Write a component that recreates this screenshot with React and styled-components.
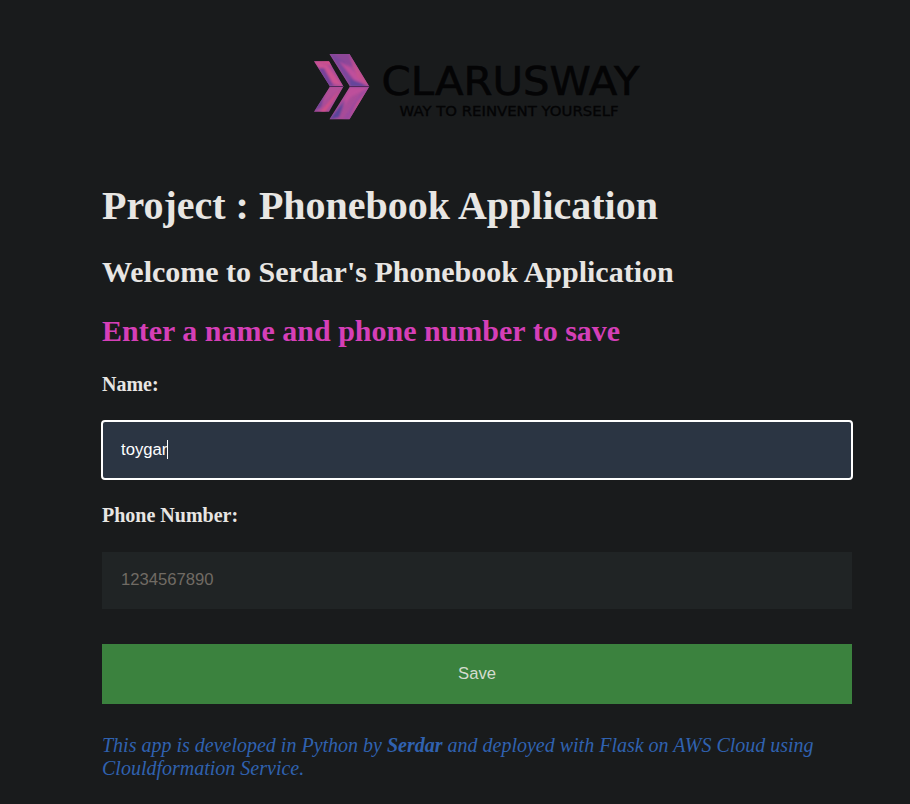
import React from "react";
import styled, { createGlobalStyle } from "styled-components";

const GlobalStyle = createGlobalStyle`
  * { box-sizing: border-box; }
  body {
    margin: 0;
    background: #191b1c;
    color: #e8e6e3;
    font-family: "Liberation Serif", "Times New Roman", serif;
    overflow: hidden;
  }
`;

const Page = styled.main`
  width: 750px;
  height: 804px;
  margin-left: 102px;
  display: flex;
  flex-direction: column;
`;

const Logo = styled.svg`
  width: 334px;
  height: 74px;
  margin: 50px 0 0 208px;
  flex: none;
`;

const Title = styled.h1`
  margin: 59px 0 0;
  font-size: 40px;
  line-height: 46px;
  white-space: nowrap;
`;

const Subtitle = styled.h2`
  margin: ${(p) => p.$gap}px 0 0;
  font-size: 30px;
  line-height: 34px;
  color: ${(p) => p.$color || "inherit"};
  white-space: nowrap;
`;

const Form = styled.form`
  display: flex;
  flex-direction: column;
  margin-top: 25px;
`;

const Label = styled.label`
  font-size: 20px;
  line-height: 23px;
  font-weight: bold;
`;

const Field = styled.div`
  display: flex;
  align-items: center;
  height: 57px;
  margin: 25px 0;
  padding: 0 19px 2px;
  background: #202425;
  color: #706b64;
  font: 16.67px/20px "Liberation Sans", Arial, sans-serif;
`;

const FocusedField = styled(Field)`
  height: 60px;
  margin: 24px -1px;
  padding: 0 18px 1px;
  background: #2b3543;
  border: 2px solid #fff;
  border-radius: 4px;
  color: #fff;
`;

const Caret = styled.span`
  width: 1px;
  height: 19px;
  background: #fff;
`;

const SaveButton = styled.button`
  height: 60px;
  margin-top: 10px;
  padding: 0 0 1px;
  border: 0;
  background: #3b823e;
  color: #d4dccf;
  font: 16.67px "Liberation Sans", Arial, sans-serif;
`;

const Footer = styled.p`
  margin: 30px 0 0;
  font-size: 20px;
  line-height: 23px;
  font-style: italic;
  color: #3062b0;
`;

function ClaruswayLogo() {
  return (
    <Logo viewBox="310 50 334 74" role="img" aria-label="Clarusway">
      <defs>
        <filter id="facets" x="-10%" y="-10%" width="120%" height="120%">
          <feGaussianBlur stdDeviation="1.3" />
        </filter>
        <clipPath id="mark">
          <path d="M314 61.3H329L343.5 86.5L329 111.7H314L330 86.5Z" />
          <path d="M329.5 54H349.5L369.3 86.5L349.5 119.2H329.5L350 86.5Z" />
        </clipPath>
      </defs>
      <g clipPath="url(#mark)">
        <path d="M310 50H373V124H310Z" fill="#a84c98" />
        <g filter="url(#facets)">
          <path d="M313 60L327 65L343 86L331 83Z" fill="#cc5293" />
          <path d="M318 68L324 68L334 86H328Z" fill="#74429a" />
          <path d="M313 60H330L333 66L324 63Z" fill="#d4508a" />
          <path d="M329 53H337L354 73L365 86H350Z" fill="#7c469c" />
          <path d="M331 53H350L358 67L350 66Z" fill="#8d4698" />
          <path d="M339 61L349 67L369 86L354 80Z" fill="#c04f9b" />
          <path d="M349 54L370 87L357 77Z" fill="#c4518e" />
          <path d="M350 79L370 87L350 87Z" fill="#65459b" />
          <path d="M330 87H343L320 105Z" fill="#b35097" />
          <path d="M313 112L325 93L321 107Z" fill="#704498" />
          <path d="M325 112L342 88L334 96L320 112Z" fill="#d35087" />
          <path d="M350 87H370L351 97L337 114Z" fill="#bd509b" />
          <path d="M329 120L345 100L339 117Z" fill="#59459a" />
          <path d="M343 119L362 92L370 87L351 119Z" fill="#9a49a0" />
          <path d="M348 120L370 87L357 103Z" fill="#d15385" />
        </g>
        <path d="M329 86.5H369" stroke="#52285c" strokeWidth="1.2" />
      </g>
      <g fill="#040405" stroke="#040405" fontFamily='"DejaVu Sans", Verdana, sans-serif'>
        <text x="381.5" y="94.7" fontSize="39.5" textLength="258" lengthAdjust="spacingAndGlyphs" strokeWidth=".6">CLARUSWAY</text>
        <text x="399.5" y="116" fontSize="14.2" textLength="219" lengthAdjust="spacingAndGlyphs" strokeWidth=".35">WAY TO REINVENT YOURSELF</text>
      </g>
    </Logo>
  );
}

export default function App() {
  return (
    <>
      <GlobalStyle />
      <Page>
        <ClaruswayLogo />
        <Title>Project : Phonebook Application</Title>
        <Subtitle $gap={26}>Welcome to Serdar's Phonebook Application</Subtitle>
        <Subtitle $gap={25} $color="#d53fb7">Enter a name and phone number to save</Subtitle>
        <Form>
          <Label>Name:</Label>
          <FocusedField>toygar<Caret /></FocusedField>
          <Label>Phone Number:</Label>
          <Field>1234567890</Field>
          <SaveButton type="button">Save</SaveButton>
        </Form>
        <Footer>
          This app is developed in Python by <b>Serdar</b> and deployed with Flask on AWS Cloud using Clouldformation Service.
        </Footer>
      </Page>
    </>
  );
}
